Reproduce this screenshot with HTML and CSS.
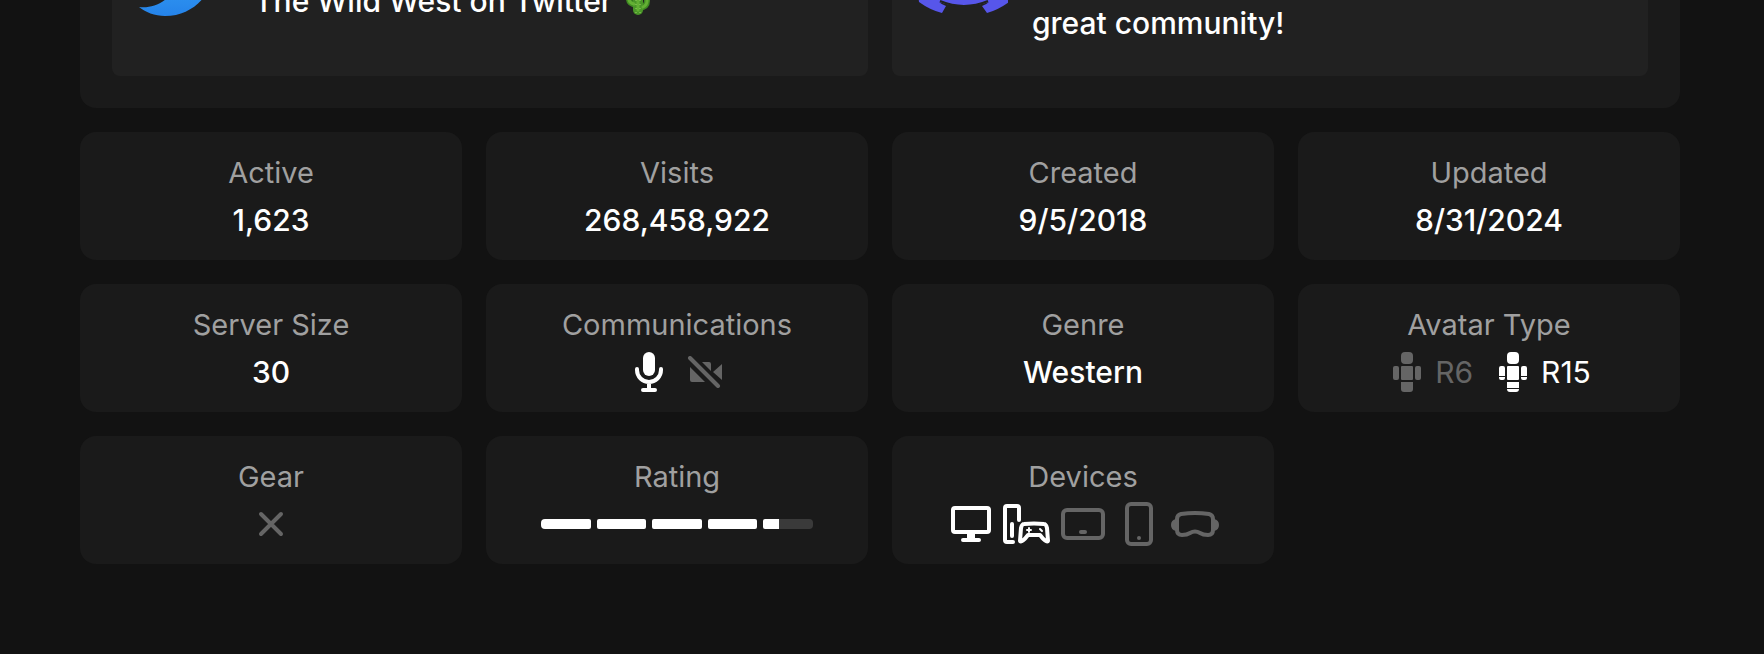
FILE: index.html
```html
<!DOCTYPE html>
<html lang="en">
<head>
<meta charset="utf-8">
<title>The Wild West</title>
<link rel="stylesheet" href="styles.css">
</head>
<body>
<main class="page">
  <section class="socials">
    <a class="social" href="#twitter">
      <svg width="94" height="118" viewBox="0 0 94 118" aria-hidden="true">
        <defs><linearGradient id="tw" x1="0" y1="0" x2="0" y2="1"><stop offset="0" stop-color="#41b4fb"/><stop offset="1" stop-color="#2583ea"/></linearGradient></defs>
        <path fill="url(#tw)" d="M3 87C12 88 22 86 30 79C21 78 15 72 13 65C16 65 19 65 21 64C12 62 6 55 6 46C9 48 12 48 14 48C6 42 3 32 8 23C18 35 31 42 46 43C43 30 53 18 66 18C72 18 77 20 81 24C86 23 90 22 93 20C92 24 89 28 85 31C82 64 64 96 29 96C19 96 9 92 3 87Z"/>
      </svg>
      <span class="lines-2"><span>The Wild West on Twitter<svg class="cactus" width="24" height="32" viewBox="0 0 24 32" aria-hidden="true"><path fill="none" stroke="#3f8a22" stroke-width="6" stroke-linecap="round" d="M3 11v4q0 5 8 6M21 10v7q0 6-8 7"/><path fill="none" stroke="#4a9628" stroke-width="10" stroke-linecap="round" d="M12 6v20"/><path fill="none" stroke="#63b034" stroke-width="3" stroke-linecap="round" d="M12 5v21M3 11v4q0 4 5 5M21 10v7q0 4-4 6"/><path fill="none" stroke="#9bd465" stroke-dasharray="1 3" d="M10 4v25M14 4v25M3 11v5M21 9v8"/></svg></span></span>
    </a>
    <a class="social" href="#discord">
      <svg width="92" height="118" viewBox="0 0 92 118" aria-hidden="true">
        <g transform="translate(2 -1)"><path fill="#5756ea" d="M10 34Q22 25 34 24L38 30Q46 28 54 30L58 24Q70 25 82 34Q94 58 91 83Q80 91 69 94L64 87Q69 85 71 83Q59 87 46 87Q33 87 21 83Q23 85 28 87L24 94Q12 91 1 83Q-2 58 10 34Z"/>
        <path fill="none" stroke="#212121" stroke-width="2" d="M22 82Q46 92 70 82"/></g>
      </svg>
      <span class="lines-3">great community!</span>
    </a>
  </section>

  <dl class="stats">
    <div class="card"><dt>Active</dt><dd class="value">1,623</dd></div>
    <div class="card"><dt>Visits</dt><dd class="value">268,458,922</dd></div>
    <div class="card"><dt>Created</dt><dd class="value">9/5/2018</dd></div>
    <div class="card"><dt>Updated</dt><dd class="value">8/31/2024</dd></div>
    <div class="card"><dt>Server Size</dt><dd class="value">30</dd></div>
    <div class="card"><dt>Communications</dt><dd class="comms">
      <svg width="28" height="40" viewBox="0 0 28 40" role="img" aria-label="Voice chat on"><rect x="8" width="12" height="24" rx="6" fill="currentColor"/><path d="M2 17v1a12 12 0 0 0 24 0v-1M14 30v8M8 38h12" fill="none" stroke="currentColor" stroke-width="4" stroke-linecap="round"/></svg>
      <svg class="off" width="36" height="32" viewBox="0 0 36 32" role="img" aria-label="Camera chat off"><path fill="currentColor" d="M3 11L18 26H5a2 2 0 0 1-2-2ZM15 6h7a2 2 0 0 1 2 2v7ZM35 8v16l-9-8Z"/><path d="M3 2L31 30" stroke="currentColor" stroke-width="4" stroke-linecap="round"/></svg>
    </dd></div>
    <div class="card"><dt>Genre</dt><dd class="value">Western</dd></div>
    <div class="card"><dt>Avatar Type</dt><dd class="avatars">
      <span class="avatar off"><svg width="28" height="40" viewBox="0 0 28 40" aria-hidden="true" fill="currentColor"><rect x="8" width="12" height="12" rx="4"/><rect y="14" width="6" height="14" rx="2"/><rect x="8" y="14" width="12" height="14" rx="1"/><rect x="22" y="14" width="6" height="14" rx="2"/><path d="M8 30h12v7a3 3 0 0 1-3 3h-6a3 3 0 0 1-3-3Z"/></svg>R6</span>
      <span class="avatar"><svg width="28" height="40" viewBox="0 0 28 40" aria-hidden="true" fill="currentColor"><rect x="8" width="12" height="12" rx="4"/><path d="M0 16q0-2 2-2h2q2 0 2 2v8H0ZM0 25h6v1q0 2-2 2H2q-2 0-2-2ZM22 16q0-2 2-2h2q2 0 2 2v8h-6ZM22 25h6v1q0 2-2 2h-2q-2 0-2-2Z"/><rect x="8" y="14" width="12" height="14" rx="1"/><path d="M8 30h12v6H8ZM8 37h12q0 3-3 3h-6q-3 0-3-3Z"/></svg>R15</span>
    </dd></div>
    <div class="card"><dt>Gear</dt><dd class="off"><svg width="26" height="26" viewBox="0 0 26 26" role="img" aria-label="Not allowed"><path d="M3 3L23 23M23 3L3 23" stroke="currentColor" stroke-width="4" stroke-linecap="round"/></svg></dd></div>
    <div class="card"><dt>Rating</dt><dd class="rating" role="img" aria-label="Rating 86%"><i></i><i></i><i></i><i></i><i class="partial"></i></dd></div>
    <div class="card"><dt>Devices</dt><dd class="devices">
      <svg width="40" height="36" viewBox="0 0 40 36" role="img" aria-label="Desktop"><rect x="2" y="2" width="36" height="24" rx="2" fill="none" stroke="currentColor" stroke-width="4"/><path fill="currentColor" d="M16 27h8v5h4a2 2 0 0 1 0 4H12a2 2 0 0 1 0-4h4Z"/></svg>
      <svg class="console" width="46" height="40" viewBox="0 0 46 40" role="img" aria-label="Console"><g fill="none" stroke="currentColor" stroke-width="4" stroke-linecap="round" stroke-linejoin="round"><path d="M16 16V4a2 2 0 0 0-2-2H4a2 2 0 0 0-2 2v32a2 2 0 0 0 2 2h6"/><path d="M9 20v12"/><path d="M21 20q10-1 20 0q2 0 3 4l1 13q-2 2-8-6H25q-6 8-8 6l1-13q1-4 3-4Z"/><path d="M26 24v4M24 26h4M37 25l2 2" stroke-width="2"/></g></svg>
      <svg class="off" width="44" height="32" viewBox="0 0 44 32" role="img" aria-label="Tablet"><rect x="2" y="2" width="40" height="28" rx="4" fill="none" stroke="currentColor" stroke-width="4"/><rect x="18" y="22" width="8" height="4" rx="2" fill="currentColor"/></svg>
      <svg class="off phone" width="28" height="44" viewBox="0 0 28 44" role="img" aria-label="Phone"><rect x="2" y="2" width="24" height="40" rx="4" fill="none" stroke="currentColor" stroke-width="4"/><circle cx="14" cy="36" r="2" fill="currentColor"/></svg>
      <svg class="off" width="48" height="26" viewBox="0 0 48 26" role="img" aria-label="VR headset"><path fill="none" stroke="currentColor" stroke-width="4" stroke-linejoin="round" d="M10 3q14-2 28 0q4 1 4 5v11q0 5-5 5q-5 0-8-2q-5-3-10 0q-3 2-8 2q-5 0-5-5V8q0-4 4-5Z"/><path fill="currentColor" d="M5 8v12q-5-1-5-6t5-6M43 8v12q5-1 5-6t-5-6"/></svg>
    </dd></div>
  </dl>
</main>
</body>
</html>
```

FILE: styles.css
```css
* { box-sizing: border-box; }
body {
  margin: 0;
  background: #121212;
  color: #fff;
  font: 500 30px/44px Inter, "Liberation Sans", sans-serif;
}
.page { padding: 0 84px 90px 80px; }
/* The panel is scrolled past its top: its items keep to the bottom edge. */
.socials {
  display: grid;
  grid-template: 76px / 1fr 1fr;
  gap: 24px;
  align-items: end;
  padding: 0 32px 32px;
  background: #1a1a1a;
  border-radius: 0 0 16px 16px;
}
.social {
  display: flex;
  align-items: center;
  gap: 24px;
  min-height: 194px;
  padding: 24px;
  background: #212121;
  border-radius: 8px;
  color: inherit;
  text-decoration: none;
}
.social svg { flex: none; }
.lines-2, .lines-3 { display: flex; align-items: flex-end; }
.lines-2 { min-height: 88px; }
.lines-3 { min-height: 132px; }
.cactus { margin-left: 14px; vertical-align: -4px; }
.stats {
  display: grid;
  grid-template-columns: repeat(4, 1fr);
  gap: 24px;
  margin: 24px 0 0;
}
.card {
  padding: 16px 12px;
  background: #1a1a1a;
  border-radius: 16px;
  text-align: center;
}
dt {
  padding-top: 2px;
  font-size: 29px;
  font-weight: 400;
  line-height: 46px;
  color: #a0a0a0;
}
dd {
  display: flex;
  align-items: center;
  justify-content: center;
  height: 48px;
  margin: 0;
}
.off { color: #656565; }
.comms { gap: 24px; padding-left: 4px; }
.avatars { gap: 26px; padding-left: 6px; font-weight: 400; }
.avatar { display: flex; align-items: center; gap: 14px; }
.rating { gap: 6px; padding: 0 43px; }
.rating i { flex: 1; height: 10px; background: #fff; border-radius: 2px; }
.rating i:first-child { border-radius: 4px 2px 2px 4px; }
.rating .partial {
  border-radius: 2px 4px 4px 2px;
  background: linear-gradient(to right, #fff 32%, #3a3a3a 32%);
}
.devices { gap: 12px; padding-left: 4px; }
.devices .phone { margin: 0 6px 0 8px; }
.console { overflow: visible; }
```
